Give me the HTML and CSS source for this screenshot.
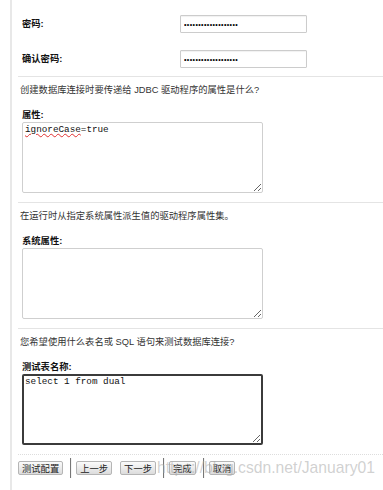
FILE: index.html
```html
<!DOCTYPE html>
<html lang="zh-CN">
<head>
    <meta charset="UTF-8">
    <title>数据库连接向导</title>
    <link rel="stylesheet" href="styles.css">
</head>
<body>
    <div class="wizard">
        <div class="row first">
            <label class="row-label">密码:</label>
            <input class="text-input" type="password" value="xxxxxxxxxxxxxxxxxxx">
        </div>
        <div class="row">
            <label class="row-label">确认密码:</label>
            <input class="text-input" type="password" value="xxxxxxxxxxxxxxxxxxx">
        </div>

        <div class="block">
            <p class="desc">创建数据库连接时要传递给 JDBC 驱动程序的属性是什么?</p>
            <label class="area-label">属性:</label>
            <div class="area" contenteditable="true"><span class="misspelt">ignoreCase</span>=true</div>
        </div>

        <div class="block">
            <p class="desc">在运行时从指定系统属性派生值的驱动程序属性集。</p>
            <label class="area-label">系统属性:</label>
            <div class="area" contenteditable="true"></div>
        </div>

        <div class="block">
            <p class="desc">您希望使用什么表名或 SQL 语句来测试数据库连接?</p>
            <label class="area-label">测试表名称:</label>
            <div class="area focused" contenteditable="true">select 1 from dual</div>
        </div>

        <div class="buttons">
            <button class="btn">测试配置</button>
            <span class="sep"></span>
            <button class="btn">上一步</button>
            <button class="btn">下一步</button>
            <span class="sep"></span>
            <button class="btn">完成</button>
            <span class="sep"></span>
            <button class="btn">取消</button>
            <span class="watermark">https://blog.csdn.net/January01</span>
        </div>
    </div>
</body>
</html>
```

FILE: styles.css
```css
body {
    margin: 0;
    background: #fff;
    color: #222;
    font-family: "Liberation Sans", "Noto Sans CJK SC", sans-serif;
    font-size: 9.3px;
    line-height: 12px;
}
.wizard {
    margin-left: 10px;
    min-height: 490px;
    border-left: 2px solid #e8e8e8;
    padding-left: 6px;
    box-sizing: border-box;
}
.row {
    display: flex;
    align-items: center;
    padding-left: 4px;
    margin-top: 17px;
}
.row.first {
    margin-top: 0;
    padding-top: 15px;
}
.row-label, .area-label {
    font-weight: bold;
    color: #111;
}
.row-label {
    width: 158px;
}
.text-input {
    width: 127px;
    height: 18px;
    box-sizing: border-box;
    border: 1px solid #ccc;
    border-radius: 1px;
    padding: 0 3px;
    font-family: "Liberation Sans", sans-serif;
    font-size: 7px;
    letter-spacing: 0.4px;
    color: #000;
    box-shadow: inset 0 1px 1px rgba(0, 0, 0, 0.06);
}
.block {
    margin-top: 8px;
    border-top: 1px solid #e4e4e4;
}
.block + .block {
    margin-top: 9px;
}
.desc {
    margin: 7px 0 0 2px;
    color: #333;
}
.area-label {
    display: block;
    margin: 13px 0 1px 4px;
}
.area {
    width: 241px;
    height: 71px;
    margin-left: 4px;
    box-sizing: border-box;
    border: 1px solid #cfcfcf;
    border-radius: 2px;
    padding: 1px 2px;
    font-family: "Liberation Mono", monospace;
    font-size: 9.3px;
    line-height: 11px;
    color: #111;
    overflow: auto;
    resize: both;
    outline: none;
}
.area.focused {
    border: 2px solid #3b3b3b;
    padding: 0 1px;
}
.misspelt {
    text-decoration: underline wavy #e03030;
    text-decoration-thickness: 1px;
    text-underline-offset: 1px;
}
.buttons {
    position: relative;
    display: flex;
    align-items: center;
    height: 30px;
    margin-top: 9px;
    padding-bottom: 4px;
    border-top: 1px dotted #ddd;
    box-sizing: border-box;
}
.btn {
    height: 14px;
    margin-right: 8px;
    padding: 0 3px;
    border: 1px solid #b5b5b5;
    border-radius: 2px;
    background: linear-gradient(#fbfbfb, #dcdcdc);
    font-family: "Noto Sans CJK SC", sans-serif;
    font-size: 9.3px;
    line-height: 12px;
    color: #222;
}
.sep {
    width: 1px;
    height: 20px;
    margin: 0 4px 0 -1px;
    background: #777;
    border-right: 1px solid #f4f4f4;
}
.watermark {
    position: absolute;
    left: 139px;
    top: 4px;
    font-family: "Liberation Sans", sans-serif;
    font-size: 15.7px;
    line-height: 18px;
    color: rgba(170, 170, 170, 0.55);
    white-space: nowrap;
    pointer-events: none;
}
```
